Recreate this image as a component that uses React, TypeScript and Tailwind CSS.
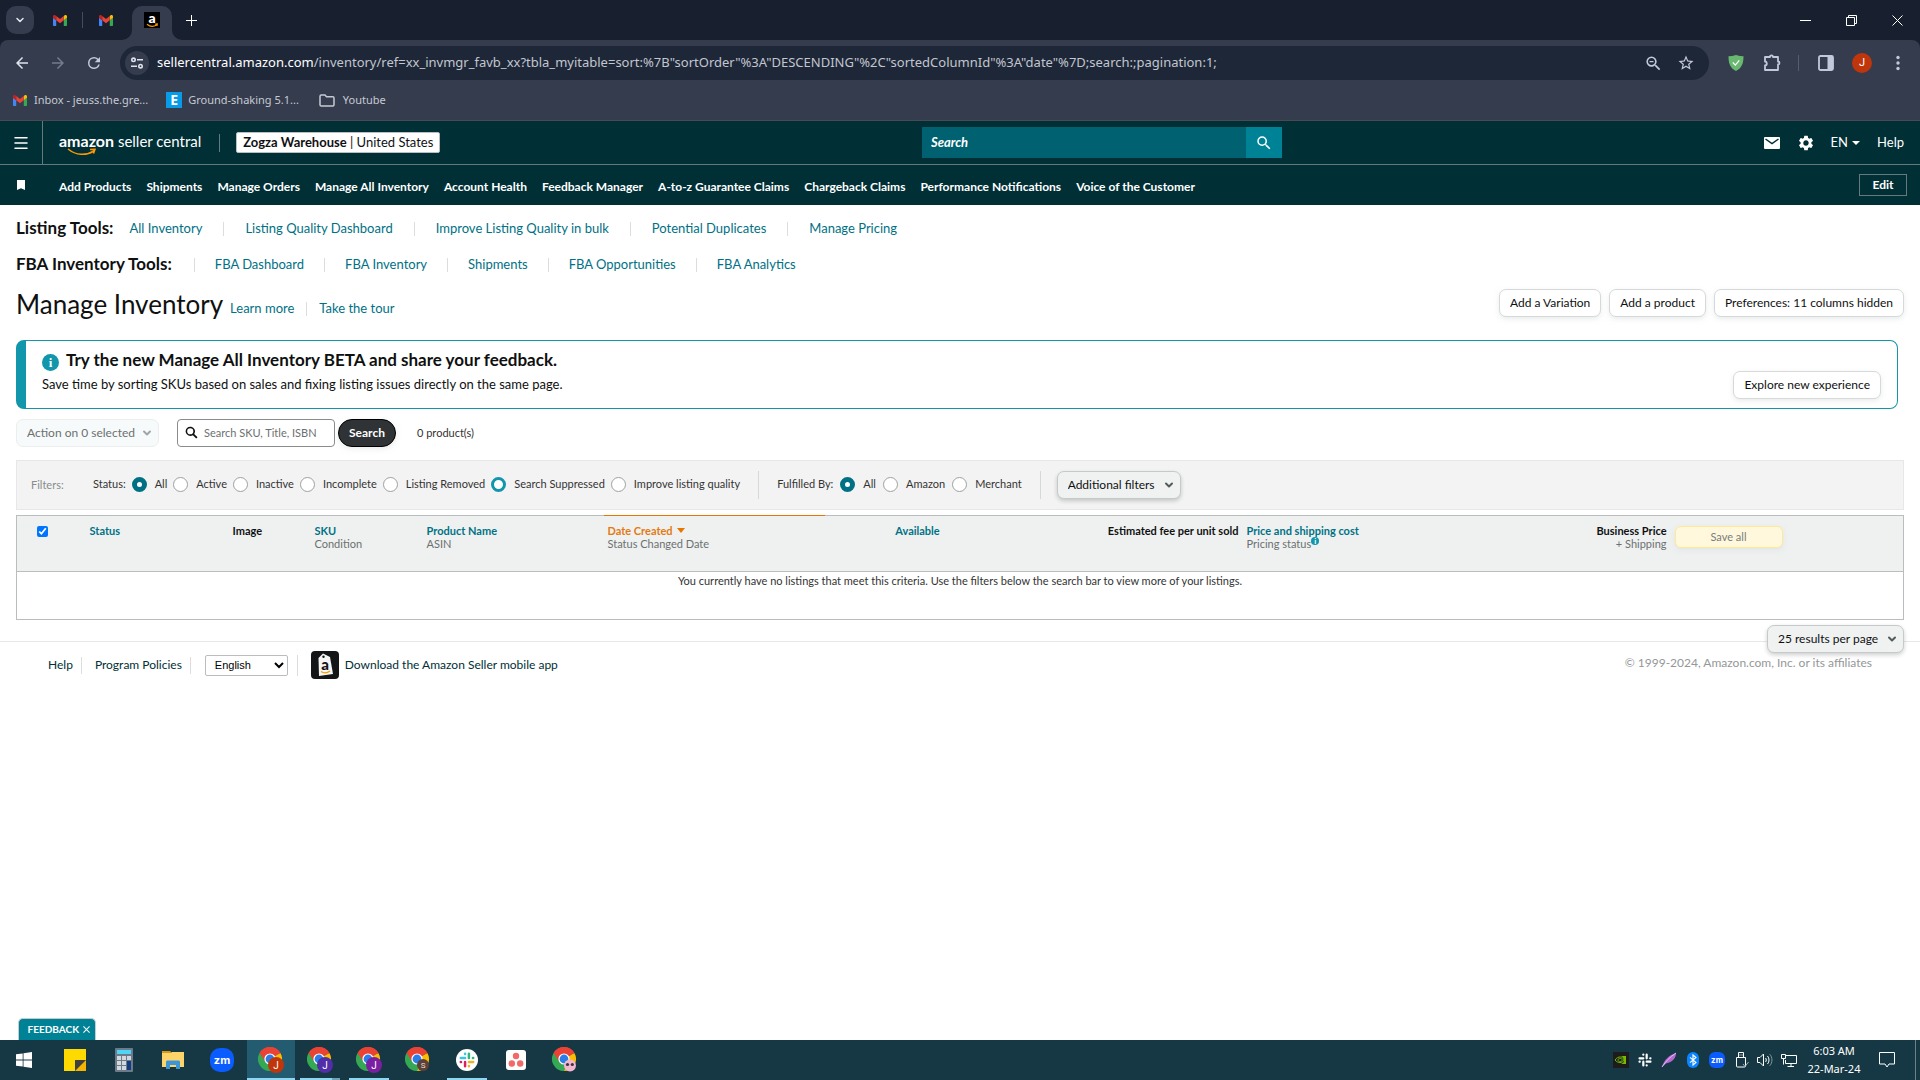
import React from 'react';
import { ChevronDown, Menu } from 'lucide-react';

const lato = "font-['Lato','Open_Sans',sans-serif]";
const segoe = "font-['Noto_Sans','Open_Sans',sans-serif]";

/* ---------- icons ---------- */

function Gmail({ className = '' }: { className?: string }) {
  return (
    <svg viewBox="0 0 24 18" className={className} preserveAspectRatio="none" aria-hidden="true">
      <path d="M1.6 18H5.5V8.7L0 4.6v11.8C0 17.300.7 18 1.600 18z" fill="#4285f4" />
      <path d="M18.500 18h3.900c.9 0 1.600-.7 1.600-1.600V4.600l-5.500 4.100z" fill="#34a853" />
      <path d="M18.500 1.600v7.100L24 4.600V2.400c0-2-2.300-3.200-3.900-2z" fill="#fbbc04" />
      <path d="M5.500 8.700V1.600L12 6.500l6.500-4.900v7.100L12 13.600z" fill="#ea4335" />
      <path d="M0 2.400v2.200l5.500 4.100V1.600L3.900.4C2.300-.8 0 .4 0 2.400z" fill="#c5221f" />
    </svg>
  );
}

function AmazonFavicon() {
  return (
    <span className="relative flex h-4 w-4 items-center justify-center bg-black">
      <span className="pb-1 font-['Lato'] text-sm leading-none font-black text-white">a</span>
      <svg viewBox="0 0 16 16" className="absolute inset-0 h-4 w-4" fill="none" stroke="#ff9900" strokeWidth="1.300" aria-hidden="true">
        <path d="M3 12.200c3 2.500 7 2.500 9.800.5M11.200 12.200l2-.2-.3 1.900" />
      </svg>
    </span>
  );
}

function WinIcon({ d }: { d: string }) {
  return (
    <svg viewBox="0 0 11 11" className="h-[11px] w-[11px]" fill="none" stroke="#fff" aria-hidden="true">
      <path d={d} />
    </svg>
  );
}

function Glyph({ d, className = 'h-5 w-5' }: { d: string; className?: string }) {
  return (
    <svg viewBox="0 0 24 24" className={className} fill="currentColor" aria-hidden="true">
      <path d={d} />
    </svg>
  );
}

const BACK = 'M20 11H7.830l5.590-5.590L12 4l-8 8 8 8 1.410-1.410L7.830 13H20v-2z';
const FORWARD = 'M12 4l-1.410 1.410L16.170 11H4v2h12.170l-5.580 5.590L12 20l8-8z';
const RELOAD = 'M17.650 6.350A7.958 7.958 0 0 0 12 4a8 8 0 1 0 7.730 10h-2.080A6 6 0 1 1 12 6c1.660 0 3.140.69 4.220 1.780L13 11h7V4l-2.350 2.350z';
const STAR = 'M22 9.240l-7.190-.62L12 2 9.190 8.630 2 9.240l5.460 4.730L5.820 21 12 17.270 18.180 21l-1.630-7.030L22 9.240zM12 15.400l-3.760 2.270 1-4.280-3.320-2.880 4.380-.38L12 6.100l1.710 4.040 4.380.38-3.320 2.880 1 4.280L12 15.400z';
const ZOOMOUT = 'M15.500 14h-.79l-.28-.27A6.470 6.470 0 0 0 16 9.500 6.500 6.500 0 1 0 9.500 16c1.610 0 3.090-.59 4.230-1.570l.27.28v.79l5 4.990L20.490 19l-4.990-5zm-6 0C7.010 14 5 11.990 5 9.500S7.010 5 9.500 5 14 7.010 14 9.500 11.990 14 9.500 14zM7 8.700h5v1.600H7z';
const SEARCH = 'M15.500 14h-.79l-.28-.27A6.470 6.470 0 0 0 16 9.500 6.500 6.500 0 1 0 9.500 16c1.610 0 3.090-.59 4.230-1.570l.27.28v.79l5 4.990L20.490 19l-4.990-5zm-6 0C7.010 14 5 11.990 5 9.500S7.010 5 9.500 5 14 7.010 14 9.500 11.990 14 9.500 14z';
const GEAR = 'M19.140 12.940c.04-.3.060-.61.060-.94 0-.32-.02-.64-.07-.94l2.030-1.580a.49.49 0 0 0 .12-.61l-1.920-3.320a.488.488 0 0 0-.59-.22l-2.390.96c-.5-.38-1.030-.7-1.620-.94l-.36-2.540a.484.484 0 0 0-.48-.41h-3.840c-.24 0-.43.17-.47.41l-.36 2.540c-.59.24-1.130.57-1.620.94l-2.390-.96c-.22-.08-.47 0-.59.22L2.740 8.870c-.12.21-.08.47.12.61l2.030 1.580c-.05.3-.09.63-.09.94s.02.64.07.94l-2.030 1.580a.49.49 0 0 0-.12.61l1.920 3.320c.12.22.37.29.59.22l2.390-.96c.5.38 1.030.7 1.620.94l.36 2.540c.05.24.24.41.48.41h3.840c.24 0 .44-.17.47-.41l.36-2.540c.59-.24 1.130-.56 1.620-.94l2.390.96c.22.08.47 0 .59-.22l1.920-3.320c.12-.22.07-.47-.12-.61l-2.010-1.580zM12 15.600A3.610 3.610 0 0 1 8.400 12c0-1.980 1.620-3.600 3.600-3.600s3.600 1.620 3.600 3.600-1.620 3.600-3.600 3.600z';

function Tune() {
  return (
    <svg viewBox="0 0 16 16" className="h-4 w-4" fill="none" stroke="#dfe3ec" strokeWidth="1.600" aria-hidden="true">
      <circle cx="4.500" cy="4.800" r="1.700" />
      <path d="M8 4.800h6M2 11.200h6" />
      <circle cx="11.500" cy="11.200" r="1.700" />
    </svg>
  );
}

function Chrome({ badge, letter }: { badge: string; letter: string }) {
  return (
    <svg viewBox="0 0 26 26" className="h-[26px] w-[26px]" aria-hidden="true">
      <path d="M12 12 1.600 6A12 12 0 0 1 22.400 6z" fill="#ea4335" />
      <path d="M12 12 22.400 6A12 12 0 0 1 12 24l-3-4z" fill="#fbbc04" />
      <path d="M12 12 1.600 6A12 12 0 0 0 12 24l5.200-9z" fill="#34a853" />
      <path d="M12 6.500H22.700L22.400 6A12 12 0 0 0 1.600 6l5.600 8.700z" fill="#ea4335" />
      <circle cx="12" cy="12" r="5.600" fill="#fff" />
      <circle cx="12" cy="12" r="4.400" fill="#2b7de9" />
      {letter === 'face' ? (
        <g>
          <circle cx="18" cy="18.500" r="6" fill="#f3b6cf" />
          <circle cx="15.500" cy="17.500" r="1.600" fill="#3b3340" />
          <circle cx="20.300" cy="17.500" r="1.600" fill="#3b3340" />
        </g>
      ) : letter === 'S' ? (
        <g>
          <circle cx="18" cy="18" r="6" fill={badge} />
          <text x="18" y="20.800" textAnchor="middle" fontSize="8" fill="#e8dcd8" fontFamily="Roboto">S</text>
        </g>
      ) : (
        <g>
          <circle cx="18" cy="18" r="8" fill={badge} />
          <text x="18" y="21.500" textAnchor="middle" fontSize="10" fill="#fff" fontFamily="Roboto">{letter}</text>
        </g>
      )}
    </svg>
  );
}

function SlackMark({ mono = false }: { mono?: boolean }) {
  const c = mono ? ['#fff', '#fff', '#fff', '#fff'] : ['#36c5f0', '#2eb67d', '#ecb22e', '#e01e5a'];
  return (
    <g strokeWidth="2.600" strokeLinecap="round" fill="none">
      <path d="M3 7.500h4.500M7.500 3v.3" stroke={c[0]} />
      <path d="M11.500 3v4.500M16 7.500h-.3" stroke={c[1]} />
      <path d="M16 11.500h-4.500M11.500 16v-.3" stroke={c[2]} />
      <path d="M7.500 16v-4.500M3 11.500h.3" stroke={c[3]} />
    </g>
  );
}

function Divider({ className }: { className: string }) {
  return <span aria-hidden="true" className={`w-px shrink-0 ${className}`} />;
}

/* ---------- browser frame ---------- */

function TabStrip() {
  return (
    <div className="flex h-10 items-center bg-[#182030]">
      <button aria-label="Search tabs" className="ml-[6px] flex h-7 w-7 items-center justify-center rounded-[10px] bg-[#353c4d] text-[#e6e9f0]">
        <ChevronDown className="h-3 w-3" strokeWidth={3} />
      </button>
      <button aria-label="Gmail" className="ml-[19px]"><Gmail className="h-[11px] w-[14px]" /></button>
      <Divider className="ml-[15px] h-4 bg-[#454c5d]" />
      <button aria-label="Gmail" className="ml-4"><Gmail className="h-[11px] w-[14px]" /></button>
      <div className="relative ml-[19px] mt-[6px] flex h-[34px] w-10 items-start justify-center rounded-t-[10px] bg-[#353c4d] pt-[6px]">
        <button aria-label="Amazon"><AmazonFavicon /></button>
        <svg viewBox="0 0 10 10" className="absolute bottom-0 -left-[10px] h-[10px] w-[10px]" fill="#353c4d" aria-hidden="true"><path d="M10 0v10H0A10 10 0 0 0 10 0z" /></svg>
        <svg viewBox="0 0 10 10" className="absolute -right-[10px] bottom-0 h-[10px] w-[10px]" fill="#353c4d" aria-hidden="true"><path d="M0 0v10h10A10 10 0 0 1 0 0z" /></svg>
      </div>
      <button aria-label="New tab" className="ml-[14px]">
        <WinIcon d="M5.500 0v11M0 5.500h11" />
      </button>
      <div className="ml-auto flex">
        <button aria-label="Minimize" className="flex w-[46px] justify-center"><WinIcon d="M0 5.500h11" /></button>
        <button aria-label="Restore" className="flex w-[46px] justify-center"><WinIcon d="M.5 2.500h8v8h-8zM2.500 2.500v-2h8v8h-2" /></button>
        <button aria-label="Close" className="flex w-[46px] justify-center"><WinIcon d="M.5.5l10 10M10.500.5l-10 10" /></button>
      </div>
    </div>
  );
}

function Toolbar() {
  return (
    <div className="flex h-[46px] items-center text-[#c3c9dc]">
      <button aria-label="Back" className="ml-[13px] text-[#dfe3ee]"><Glyph d={BACK} className="h-[18px] w-[18px]" /></button>
      <button aria-label="Forward" className="ml-[18px] text-[#747b8d]"><Glyph d={FORWARD} className="h-[18px] w-[18px]" /></button>
      <button aria-label="Reload" className="ml-[18px]"><Glyph d={RELOAD} className="h-[18px] w-[18px]" /></button>
      <div className="ml-[17px] flex h-[34px] flex-1 items-center rounded-full bg-[#1e2738] pr-[14px] pl-[5px]">
        <button aria-label="Site information" className="flex h-6 w-6 items-center justify-center rounded-full bg-[#353c4d]"><Tune /></button>
        <div role="textbox" aria-label="Address" className={`ml-2 flex-1 text-[13px] whitespace-nowrap text-[#c2c6cf] ${segoe}`}>
          <span className="text-white">sellercentral.amazon.com</span>/inventory/ref=xx_invmgr_favb_xx?tbla_myitable=sort:%7B"sortOrder"%3A"DESCENDING"%2C"sortedColumnId"%3A"date"%7D;search:;pagination:1;
        </div>
        <button aria-label="Zoom"><Glyph d={ZOOMOUT} className="h-[19px] w-[19px]" /></button>
        <button aria-label="Bookmark this page" className="ml-[14px]"><Glyph d={STAR} className="h-[18px] w-[18px]" /></button>
      </div>
      <button aria-label="Ad blocker" className="ml-[19px]">
        <svg viewBox="0 0 16 16" className="h-4 w-4" aria-hidden="true">
          <path d="M8 0c2.500.8 5 1.200 7.500 1.200C15.500 8 14 13 8 16 2 13 .5 8 .5 1.200 3 1.200 5.500.8 8 0z" fill="#68b96f" />
          <path d="M4.800 7.500l2.500 2.600 4-4.800" stroke="#fff" strokeWidth="1.300" fill="none" />
        </svg>
      </button>
      <button aria-label="Extensions" className="ml-[19px]">
        <svg viewBox="0 0 18 18" className="h-[18px] w-[18px]" fill="none" stroke="currentColor" strokeWidth="1.800" aria-hidden="true">
          <path d="M2 3h5c0-2.300 3-2.300 3 0h5v4.500c2 0 2 3 0 3V16H2v-4.500c2.400 0 2.400-4 0-4z" strokeLinejoin="round" />
        </svg>
      </button>
      <Divider className="ml-[17px] h-4 bg-[#565d70]" />
      <button aria-label="Side panel" className="ml-[19px]">
        <svg viewBox="0 0 16 16" className="h-4 w-4" aria-hidden="true">
          <rect x="1" y="1" width="14" height="14" rx="1.500" fill="none" stroke="currentColor" strokeWidth="1.800" />
          <path d="M9.500 1H15v14H9.500z" fill="currentColor" />
        </svg>
      </button>
      <button aria-label="Profile" className="ml-[18px] flex h-5 w-5 items-center justify-center rounded-full bg-[#bf360c] font-['Roboto'] text-[11px] text-white">J</button>
      <button aria-label="Menu" className="mr-[14px] ml-[18px]">
        <svg viewBox="0 0 16 16" className="h-4 w-4" fill="currentColor" aria-hidden="true"><circle cx="8" cy="2.500" r="1.700" /><circle cx="8" cy="8" r="1.700" /><circle cx="8" cy="13.500" r="1.700" /></svg>
      </button>
    </div>
  );
}

function Bookmarks() {
  return (
    <div className={`flex h-[34px] items-center pb-[6px] text-[11px] text-[#c6cad4] ${segoe}`}>
      <a href="#inbox" className="ml-[13px] flex items-center gap-[7px]"><Gmail className="h-[11px] w-[14px]" />Inbox - jeuss.the.gre...</a>
      <a href="#ground" className="ml-[18px] flex items-center gap-[6px]">
        <span className="flex h-4 w-4 items-center justify-center bg-[#0a9be8] text-sm leading-none font-bold text-white">E</span>Ground-shaking 5.1...
      </a>
      <a href="#youtube" className="ml-5 flex items-center gap-2">
        <svg viewBox="0 0 16 13" className="h-[13px] w-4" fill="none" stroke="currentColor" strokeWidth="1.500" aria-hidden="true"><path d="M1 2.500C1 1.500 1.500 1 2.200 1H6l1.500 1.800h6.300c.7 0 1.200.5 1.200 1.200v6.800c0 .7-.5 1.200-1.200 1.200H2.200C1.500 12 1 11.500 1 10.800z" /></svg>
        Youtube
      </a>
    </div>
  );
}

/* ---------- Seller Central header ---------- */

const NAV = ['Add Products', 'Shipments', 'Manage Orders', 'Manage All Inventory', 'Account Health', 'Feedback Manager', 'A-to-z Guarantee Claims', 'Chargeback Claims', 'Performance Notifications', 'Voice of the Customer'];

function SiteHeader() {
  return (
    <header className="bg-[#002f36] text-white">
      <div className="grid h-11 grid-cols-[922fr_360px_638fr] items-center border-b border-[#66797d]">
        <div className="flex h-full items-center">
          <button aria-label="Open menu" className="flex h-full w-[43px] items-center justify-center border-r border-[#66797d]"><Menu className="h-[18px] w-[18px]" strokeWidth={2} /></button>
          <a href="#home" className="relative ml-4 pb-1 text-[15px] leading-5 whitespace-nowrap">
            <span className="text-base leading-5 font-bold">amazon</span> seller central
            <svg viewBox="0 0 30 8" className="absolute top-[17px] left-2 h-2 w-[30px]" fill="none" stroke="#ff9900" strokeWidth="1.500" aria-hidden="true">
              <path d="M1 1c8 6.500 18 7 26 2M23 1.500l5-.3-1.500 4.300" />
            </svg>
          </a>
          <Divider className="ml-[18px] h-[18px] bg-[#66797d]" />
          <button className="ml-4 h-[21px] rounded-[2px] border border-[#b7bfc1] bg-white px-[6px] text-[13px] leading-none whitespace-nowrap text-[#0f1111]"><span className="font-bold">Zogza Warehouse</span> | United States</button>
        </div>
        <form className="flex h-[31px]" onSubmit={(e) => e.preventDefault()}>
          <input aria-label="Search Seller Central" placeholder="Search" className="min-w-0 flex-1 bg-[#006170] px-[9px] text-[13px] font-bold italic placeholder:text-white" />
          <button aria-label="Search" className="flex w-9 items-center justify-center bg-[#008296]"><Glyph d={SEARCH} className="h-[18px] w-[18px]" /></button>
        </form>
        <div className="flex items-center justify-end pr-4 text-[13px]">
          <button aria-label="Messages" className="mr-[17px]">
            <svg viewBox="0 0 16 12" className="h-3 w-4" aria-hidden="true"><rect width="16" height="12" rx="1" fill="#fff" /><path d="M1.500 2 8 6.500 14.500 2" fill="none" stroke="#002f36" strokeWidth="1.500" /></svg>
          </button>
          <button aria-label="Settings" className="mr-4"><Glyph d={GEAR} className="h-[18px] w-[18px]" /></button>
          <button className="mr-[17px] flex items-center gap-1">EN
            <svg viewBox="0 0 8 4" className="h-1 w-2" fill="#fff" aria-hidden="true"><path d="M0 0h8L4 4z" /></svg>
          </button>
          <a href="#help">Help</a>
        </div>
      </div>
      <div className="flex h-10 items-center">
        <svg viewBox="0 0 8 10" className="ml-[17px] h-[10px] w-2" fill="#fff" aria-label="Favorites"><path d="M0 0h8v10L4 8.200 0 10z" /></svg>
        <nav className="ml-[34px] flex gap-[15px] pt-1 text-xs font-bold whitespace-nowrap">
          {NAV.map((n) => <a key={n} href="#nav">{n}</a>)}
        </nav>
        <button className="mr-[13px] ml-auto h-[22px] w-12 border border-[#66797d] text-xs font-bold">Edit</button>
      </div>
    </header>
  );
}

/* ---------- page ---------- */

const link = 'text-[#007185]';
const pill = 'h-7 rounded-[7px] border border-[#d5d9d9] bg-white px-[10px] text-xs text-[#0f1111] shadow-[0_2px_5px_rgba(213,217,217,0.5)] whitespace-nowrap';

function ToolLinks({ title, items, lead = false }: { title: string; items: string[]; lead?: boolean }) {
  const bar = lead ? 'mx-5 h-[14px] bg-[#ddd]' : 'mx-[21px] h-[14px] bg-[#ddd]';
  return (
    <div className="flex h-9 items-center whitespace-nowrap">
      <h2 className="text-[17px] leading-6 font-bold text-[#0f1111]">{title}</h2>
      <div className={`flex items-center pt-[2px] ${lead ? 'pl-[2px]' : 'pl-4'}`}>
        {items.map((t, i) => (
          <React.Fragment key={t}>
            {(lead || i > 0) && <Divider className={bar} />}
            <a href="#tool" className={`text-[13px] ${link}`}>{t}</a>
          </React.Fragment>
        ))}
      </div>
    </div>
  );
}

function Dropdown({ label, text, className, disabled = false }: { label: string; text: string; className: string; disabled?: boolean }) {
  return (
    <div className="relative">
      <select aria-label={label} disabled={disabled} className={`block h-7 appearance-none rounded-[7px] border pl-[10px] text-xs whitespace-nowrap opacity-100 ${className}`}>
        <option>{text}</option>
      </select>
      <ChevronDown className={`pointer-events-none absolute top-2 right-[6px] h-3 w-3 ${disabled ? 'text-[#a0a6a6]' : 'text-[#555b5b]'}`} strokeWidth={4} />
    </div>
  );
}

function Radio({ name, text, checked = false, focus = false }: { name: string; text: string; checked?: boolean; focus?: boolean }) {
  return (
    <label className="flex items-center gap-2">
      <input
        type="radio"
        name={name}
        defaultChecked={checked}
        className={`h-[15px] w-[15px] appearance-none rounded-full bg-white checked:border-[5px] checked:border-[#007185] ${focus ? 'border-[3px] border-[#1196ab]' : 'border border-[#9da2a2]'}`}
      />
      {text}
    </label>
  );
}

function Filters() {
  return (
    <div className="flex h-[50px] items-center border border-[#e7e7e7] bg-[#f3f3f3] pl-[14px] text-[11px] whitespace-nowrap text-[#333]">
      <span className="w-[62px] text-[#888c8c]">Filters:</span>
      <div role="radiogroup" aria-labelledby="status-label" className="flex items-center gap-[6px] pb-px">
        <span id="status-label">Status:</span>
        <Radio name="status" text="All" checked />
        <Radio name="status" text="Active" />
        <Radio name="status" text="Inactive" />
        <Radio name="status" text="Incomplete" />
        <Radio name="status" text="Listing Removed" />
        <Radio name="status" text="Search Suppressed" focus />
        <Radio name="status" text="Improve listing quality" />
      </div>
      <Divider className="mx-[18px] h-7 bg-[#d5d9d9]" />
      <div role="radiogroup" aria-labelledby="fulfilled-label" className="flex items-center gap-[7px] pb-px">
        <span id="fulfilled-label">Fulfilled By:</span>
        <Radio name="fulfilled" text="All" checked />
        <Radio name="fulfilled" text="Amazon" />
        <Radio name="fulfilled" text="Merchant" />
      </div>
      <Divider className="mr-4 ml-[18px] h-7 bg-[#d5d9d9]" />
      <Dropdown label="Additional filters" text="Additional filters" className="w-[124px] border-[#c4caca] bg-[#f0f2f2] text-[#0f1111] shadow-[0_2px_4px_rgba(15,17,17,0.2)]" />
    </div>
  );
}

function Listings() {
  const th = 'px-1 pt-2 align-top font-bold leading-[13px]';
  return (
    <table className="mt-[5px] w-full table-fixed border border-[#b9bdbd] text-[11px]">
      <colgroup>
        <col className="w-[69px]" />
        <col className="w-[143px]" />
        <col className="w-[82px]" />
        <col className="w-[112px]" />
        <col className="w-[181px]" />
        <col className="w-[221px]" />
        <col className="w-[186px]" />
        <col className="w-[232px]" />
        <col className="w-[218px]" />
        <col className="w-[210px]" />
        <col />
      </colgroup>
      <thead>
        <tr className="h-14 border-b border-[#b9bdbd] bg-[#eff1f1] text-left whitespace-nowrap text-[#0f1111]">
          <th className="pt-[10px] pl-5 align-top"><input type="checkbox" aria-label="Select all" defaultChecked className="block h-[11px] w-[11px] accent-[#0075ff]" /></th>
          <th className={`${th} ${link}`}>Status</th>
          <th className={th}>Image</th>
          <th className={`${th} ${link}`}>SKU<div className="font-normal text-[#6c7070]">Condition</div></th>
          <th className={`${th} ${link}`}>Product Name<div className="font-normal text-[#6c7070]">ASIN</div></th>
          <th className={`${th} border-t border-[#e77600] text-[#e47911]`}>
            <span className="flex items-center gap-1">Date Created
              <svg viewBox="0 0 8 5" className="h-[5px] w-2" fill="#e77600" aria-hidden="true"><path d="M0 0h8L4 5z" /></svg>
            </span>
            <div className="font-normal text-[#6c7070]">Status Changed Date</div>
          </th>
          <th className={`${th} text-center ${link}`}>Available</th>
          <th className={`${th} text-right`}>Estimated fee per unit sold</th>
          <th className={`${th} ${link}`}>Price and shipping cost
            <div className="flex font-normal text-[#6c7070]">Pricing status<span className="flex h-2 w-2 items-center justify-center rounded-full bg-[#1196ab] text-[8px] font-bold text-white">i</span></div>
          </th>
          <th className={`${th} text-right`}>Business Price<div className="font-normal text-[#6c7070]">+ Shipping</div></th>
          <th className="pt-[10px] pl-1 align-top">
            <button disabled className="block h-[22px] w-[108px] rounded-[6px] border border-[#ffe996] bg-[#fff8dc] font-normal text-[#797d7d] shadow-[0_2px_5px_rgba(213,217,217,0.5)]">Save all</button>
          </th>
        </tr>
      </thead>
      <tbody>
        <tr className="h-12">
          <td colSpan={11} className="pt-[2px] text-center align-top leading-[13px] text-[#333]">You currently have no listings that meet this criteria. Use the filters below the search bar to view more of your listings.</td>
        </tr>
      </tbody>
    </table>
  );
}

function Footer() {
  return (
    <footer className="flex items-center border-t border-[#e7e7e7] pt-[9px] pr-12 pl-12 text-xs whitespace-nowrap text-[#002f36]">
      <a href="#help">Help</a>
      <Divider className="mr-[13px] ml-2 h-[17px] bg-[#ddd]" />
      <a href="#policies">Program Policies</a>
      <Divider className="mr-[14px] ml-2 h-[17px] bg-[#ddd]" />
      <select aria-label="Language" className="h-[21px] w-[83px] rounded-[2px] border border-[#b9bdbd] bg-white pl-[5px] font-['Liberation_Sans'] text-[11px] text-black"><option>English</option></select>
      <Divider className="mr-[13px] ml-[9px] h-[21px] bg-[#ddd]" />
      <a href="#app" className="flex items-center gap-[6px]">
        <svg viewBox="0 0 28 28" className="h-7 w-7" aria-hidden="true">
          <rect width="28" height="28" rx="4" fill="#131516" />
          <path d="M7.500 7l4.500-4.500L19 6l3 17-14 2z" fill="#f6f6f6" />
          <circle cx="12.500" cy="5.800" r="1.200" fill="#131516" />
          <text x="14.200" y="18.500" textAnchor="middle" fontSize="15" fontWeight="900" fontFamily="Lato" fill="#131516">a</text>
          <path d="M10 20.500c3 2 6 1.800 9-.5" stroke="#ff9900" strokeWidth="1.200" fill="none" />
        </svg>
        Download the Amazon Seller mobile app
      </a>
      <span className="ml-auto pb-1 text-[#949898]">© 1999-2024, Amazon.com, Inc. or its affiliates</span>
    </footer>
  );
}

/* ---------- desktop taskbar ---------- */

function TaskItem({ label, active = false, bar = '', children }: { label: string; active?: boolean; bar?: string; children: React.ReactNode }) {
  return (
    <button aria-label={label} className={`relative flex h-10 w-12 items-center justify-center ${active ? 'bg-[#235c70]' : ''}`}>
      {children}
      {bar && <span className={`absolute bottom-0 h-[2px] bg-[#8fd6f0] ${bar}`} />}
    </button>
  );
}

function Zoom({ className }: { className: string }) {
  return <span className={`flex items-center justify-center bg-[#0b5cff] font-['Inter'] leading-none font-bold text-white ${className}`}>zm</span>;
}

function Taskbar() {
  return (
    <div className={`flex h-10 items-center bg-[#163844] pl-[2px] ${segoe}`}>
      <div className="flex gap-px">
        <TaskItem label="Start">
          <svg viewBox="0 0 16 16" className="mr-1 h-4 w-4" fill="#fff" aria-hidden="true"><path d="M0 2.300 6.700 1.400v6.200H0zM7.500 1.200 16 0v7.600H7.500zM0 8.400h6.700v6.200L0 13.700zM7.500 8.400H16V16l-8.500-1.200z" /></svg>
        </TaskItem>
        <TaskItem label="Sticky Notes">
          <svg viewBox="0 0 22 22" className="h-[22px] w-[22px]" aria-hidden="true"><path d="M0 0h22v22H0z" fill="#ffda00" /><path d="M11 22V11h11v11z" fill="#f5b400" /><path d="M11 22V11h11z" fill="#3f3f3f" /></svg>
        </TaskItem>
        <TaskItem label="Calculator">
          <svg viewBox="0 0 18 24" className="h-6 w-[18px]" aria-hidden="true">
            <rect width="18" height="24" rx="1" fill="#6c7a89" />
            <path d="M2 2h14v4H2z" fill="#4fd6f7" />
            <path d="M2 8h4v4H2zM7 8h4v4H7zM12 8h4v4h-4zM2 13h4v4H2zM7 13h4v4H7zM2 18h4v4H2zM7 18h4v4H7z" fill="#d3d8de" />
            <path d="M12 13h4v9h-4z" fill="#123c80" />
          </svg>
        </TaskItem>
        <TaskItem label="File Explorer">
          <svg viewBox="0 0 22 20" className="h-5 w-[22px]" aria-hidden="true">
            <path d="M0 1h8l2 2H0z" fill="#d99a12" /><path d="M0 3h9l1-1h12v15H0z" fill="#fcd46a" />
            <path d="M4 19v-7.500l1-1h12l1 1V19h-4v-4H8v4z" fill="#3d94d6" />
          </svg>
        </TaskItem>
        <TaskItem label="Zoom"><Zoom className="h-6 w-6 rounded-[10px] text-[11px]" /></TaskItem>
        <TaskItem label="Chrome" active bar="inset-x-0"><Chrome badge="#bf360c" letter="J" /></TaskItem>
        <TaskItem label="Chrome" bar="left-1 right-1 border-r-8 border-[#6fa3b4]"><Chrome badge="#512da8" letter="J" /></TaskItem>
        <TaskItem label="Chrome" bar="left-1 right-1"><Chrome badge="#7b1fa2" letter="J" /></TaskItem>
        <TaskItem label="Chrome"><Chrome badge="#5d4037" letter="S" /></TaskItem>
        <TaskItem label="Slack" bar="left-1 right-1">
          <svg viewBox="-2 -2 23 23" className="h-[22px] w-[22px]" aria-hidden="true"><circle cx="9.500" cy="9.500" r="11.500" fill="#fff" /><SlackMark /></svg>
        </TaskItem>
        <TaskItem label="Asana">
          <svg viewBox="0 0 20 20" className="h-5 w-5" aria-hidden="true"><rect width="20" height="20" rx="3" fill="#fff" /><g fill="#f06a6a"><circle cx="10" cy="6" r="3.200" /><circle cx="5.800" cy="13.500" r="3.200" /><circle cx="14.200" cy="13.500" r="3.200" /></g></svg>
        </TaskItem>
        <TaskItem label="Chrome"><Chrome badge="" letter="face" /></TaskItem>
      </div>

      <div className="ml-auto flex items-center gap-2">
        <svg viewBox="0 0 16 16" className="h-4 w-4" aria-hidden="true"><path d="M0 0h16v16H0z" fill="#1c1c1c" /><path d="M2 8c3-4.500 8-3.500 9 0-2 3.500-6 3.500-9 0zM4.500 8c1.500 2 4 2 5 0-1-2-3.500-2-5 0z" fill="none" stroke="#76b900" strokeWidth="1" /><path d="M8 4h5v8H8c4-1.500 4-6 0-8z" fill="#76b900" /></svg>
        <svg viewBox="0 0 19 19" className="h-4 w-4" aria-hidden="true"><SlackMark mono /></svg>
        <svg viewBox="0 0 16 16" className="h-4 w-4" aria-hidden="true"><path d="M1 15C3 8 8 3 15 1c0 5-3 9-10 10.500z" fill="#b46ad0" /><path d="M1 15C5 9 9 5 15 1" stroke="#e3b9f0" fill="none" /></svg>
        <svg viewBox="0 0 16 16" className="h-4 w-4" aria-hidden="true"><rect x="2" width="12" height="16" rx="6" fill="#0a84ff" /><path d="M5 5.300 11 10.500 8 13V3l3 2.500L5 10.700" fill="none" stroke="#fff" strokeWidth="1.100" /></svg>
        <Zoom className="h-4 w-4 rounded-[6px] text-[8px]" />
        <svg viewBox="0 0 14 16" className="ml-[2px] h-4 w-[14px]" fill="none" stroke="#fff" aria-hidden="true"><path d="M3.500 5.500v-5h5v5M1.500 5.500h9v8.500a1 1 0 0 1-1 1h-7a1 1 0 0 1-1-1zM5 2.500v1M7 2.500v1" /><path d="M8 12l2 2.500 3.500-4.500" stroke="#9fb3ba" /></svg>
        <svg viewBox="0 0 16 16" className="h-4 w-4" fill="none" stroke="#fff" aria-hidden="true"><path d="M.5 5.500v5H3l3.500 3.500V2L3 5.500zM8.500 6c1 1 1 3 0 4M10.500 4c2 2 2 6 0 8" /><path d="M12.700 2.200c3 3 3 8.600 0 11.600" stroke="#7f979f" /></svg>
        <svg viewBox="0 0 16 16" className="h-4 w-4" fill="none" stroke="#fff" aria-hidden="true"><path d="M5 3.500h10.500v8H4.500V8M10 11.500v3M6.500 14.500H13M.5 2.500h4v4h-4zM2.500 6.500v6" /></svg>
      </div>
      <div className="ml-2 w-[58px] text-center text-[11px] leading-[18px] whitespace-nowrap text-white">6:03 AM<br />22-Mar-24</div>
      <button aria-label="Notifications" className="ml-4 flex">
        <svg viewBox="0 0 16 16" className="h-4 w-4" fill="none" stroke="#fff" aria-hidden="true"><path d="M.5.5h15v11.500H10L8 15l-2-3H.5z" /></svg>
      </button>
      <Divider className="mr-1 ml-5 h-10 bg-[#6b828b]" />
    </div>
  );
}

export default function App() {
  return (
    <div className={`flex min-h-screen flex-col bg-white text-[#0f1111] ${lato}`}>
      <div className="bg-[#182030]">
        <TabStrip />
        <div className="rounded-t-lg border-b border-[#4a4b52] bg-[#353c4d]">
          <Toolbar />
          <Bookmarks />
        </div>
      </div>
      <SiteHeader />
      <main className="flex flex-1 flex-col">
        <div className="px-4 pt-[5px]">
          <ToolLinks title="Listing Tools:" items={['All Inventory', 'Listing Quality Dashboard', 'Improve Listing Quality in bulk', 'Potential Duplicates', 'Manage Pricing']} />
          <ToolLinks title="FBA Inventory Tools:" lead items={['FBA Dashboard', 'FBA Inventory', 'Shipments', 'FBA Opportunities', 'FBA Analytics']} />

          <div className="flex h-11 items-center text-[13px] whitespace-nowrap">
            <h1 className="mr-[7px] text-[26px] leading-9">Manage Inventory</h1>
            <div className="flex items-center pt-[10px]">
              <a href="#learn" className={link}>Learn more</a>
              <Divider className="mx-3 h-[14px] bg-[#ddd]" />
              <a href="#tour" className={link}>Take the tour</a>
            </div>
            <div className="ml-auto flex gap-2 pb-[2px]">
              <button className={pill}>Add a Variation</button>
              <button className={pill}>Add a product</button>
              <button className={pill}>Preferences: 11 columns hidden</button>
            </div>
          </div>

          <section className="mt-[14px] mr-[6px] flex min-h-[69px] items-end justify-between rounded-lg border border-l-[10px] border-[#1196ab] pt-[5px] pr-4 pb-[9px] pl-4">
            <div className="self-start">
              <h3 className="flex items-center gap-[7px] text-[17px] leading-7 font-bold">
                <span className="mt-1 flex h-[17px] w-[17px] items-center justify-center rounded-full bg-[#1196ab] font-['Liberation_Serif'] text-[13px] leading-none text-white">i</span>
                Try the new Manage All Inventory BETA and share your feedback.
              </h3>
              <p className="text-[13px] leading-5">Save time by sorting SKUs based on sales and fixing listing issues directly on the same page.</p>
            </div>
            <button className={pill}>Explore new experience</button>
          </section>

          <div className="mt-[10px] flex items-center">
            <Dropdown label="Bulk action" text="Action on 0 selected" disabled className="w-[143px] border-[#eceeee] bg-[#f7fafa] text-[#6c7070]" />
            <label className="ml-[18px] flex h-7 w-[158px] items-center rounded-[4px] border border-[#888c8c] pl-[7px]">
              <Glyph d="M15.800 13.500l5.700 5.700-2.300 2.300-5.700-5.700a8 8 0 1 1 2.300-2.300zM9 14.300A5.300 5.300 0 1 0 9 3.700a5.300 5.300 0 0 0 0 10.600z" className="h-[14px] w-[14px]" />
              <input aria-label="Search SKU, Title, ISBN" placeholder="Search SKU, Title, ISBN" className="ml-[5px] min-w-0 flex-1 text-[11px] placeholder:text-[#6c7070]" />
            </label>
            <button className="ml-[3px] h-7 w-[58px] rounded-full border border-black bg-[#303335] text-xs font-bold text-white shadow-[0_2px_5px_rgba(213,217,217,0.5)]">Search</button>
            <span className="ml-[21px] text-[11px] text-[#333]">0 product(s)</span>
          </div>

          <div className="mt-[13px]"><Filters /></div>
          <Listings />
          <div className="relative z-10 flex h-[21px] justify-end pt-[5px]">
            <Dropdown label="Results per page" text="25 results per page" className="w-[137px] border-[#c4caca] bg-[#f0f2f2] text-[#0f1111] shadow-[0_2px_4px_rgba(15,17,17,0.2)]" />
          </div>
        </div>
        <Footer />
        <button className="mt-auto ml-[18px] flex h-[22px] w-[78px] items-center justify-end gap-1 rounded-t-[5px] border border-b-0 border-[#c8cccc] bg-[#008296] pr-[5px] text-[10px] font-bold text-white">
          FEEDBACK
          <svg viewBox="0 0 8 8" className="h-[7px] w-[7px]" stroke="#fff" strokeWidth="1.200" aria-hidden="true"><path d="M.5.5l7 7M7.500.5l-7 7" /></svg>
        </button>
      </main>
      <Taskbar />
    </div>
  );
}
